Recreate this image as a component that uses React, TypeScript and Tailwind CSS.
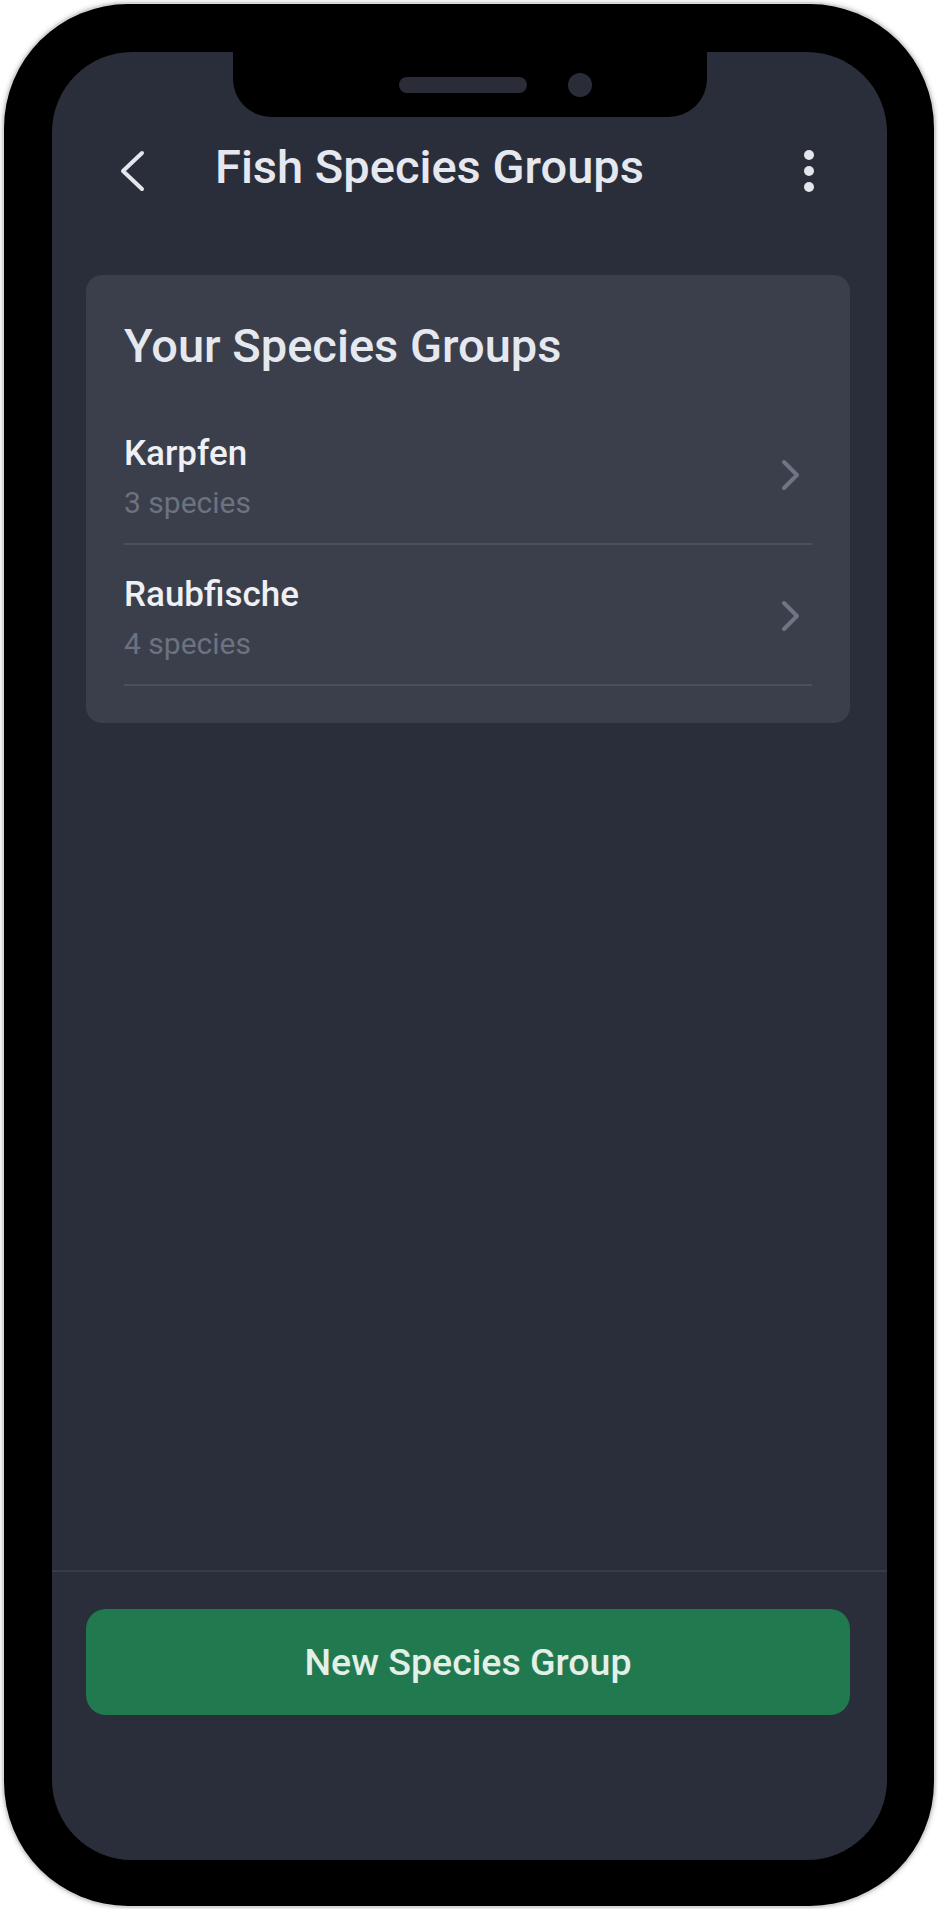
import React from "react";

const font = { fontFamily: "Roboto, 'Noto Sans', Arial, sans-serif" };

function Row({ name, count }: { name: string; count: string }) {
  return (
    <div className="flex items-center border-b-2 border-[#4a505c] pt-[30px] pb-[22px] pr-[10px]">
      <div className="flex flex-col flex-1">
        <div className="text-[35px] leading-[40px] font-medium text-[#eef0f5]">{name}</div>
        <div className="mt-[11px] text-[30px] leading-[36px] text-[#6c7280]">{count}</div>
      </div>
      <svg className="mb-[6px]" width="22" height="34" viewBox="0 0 22 34" fill="none">
        <path d="M4 4 L17 17 L4 30" stroke="#6f7582" strokeWidth="4" strokeLinecap="round" strokeLinejoin="round" />
      </svg>
    </div>
  );
}

export default function App() {
  return (
    <div className="w-[938px] h-[1909px] bg-white p-[4px]" style={font}>
      <div className="w-[930px] h-[1902px] bg-black rounded-[124px] pl-[48px] pr-[47px] pt-[48px] pb-[46px] shadow-[0_0_0_2px_#d6d6d6,0_0_5px_2px_rgba(0,0,0,0.18)]">
        <div className="relative w-[835px] h-[1808px] bg-[#2a2e3a] rounded-[80px] overflow-hidden flex flex-col">
          {/* notch */}
          <div className="absolute left-[181px] top-0 w-[474px] h-[65px] bg-black rounded-b-[38px] flex items-center">
            <div className="ml-[166px] w-[128px] h-[16px] rounded-full bg-[#2a2d38]" />
            <div className="ml-[41px] w-[24px] h-[24px] rounded-full bg-[#2a2d38]" />
          </div>

          {/* header */}
          <div className="mt-[79px] h-[80px] flex items-center shrink-0">
            <svg className="ml-[67px]" width="26" height="42" viewBox="0 0 26 42" fill="none">
              <path d="M23 3 L4 21 L23 39" stroke="#e4e6ee" strokeWidth="4" strokeLinecap="round" strokeLinejoin="round" />
            </svg>
            <div className="ml-[70px] mb-[8px] text-[47px] leading-[56px] font-medium text-[#e6e8f0]">Fish Species Groups</div>
            <div className="ml-auto mr-[73px] flex flex-col gap-[6px]">
              <div className="w-[10px] h-[10px] rounded-full bg-[#e4e6ee]" />
              <div className="w-[10px] h-[10px] rounded-full bg-[#e4e6ee]" />
              <div className="w-[10px] h-[10px] rounded-full bg-[#e4e6ee]" />
            </div>
          </div>

          {/* card */}
          <div className="mt-[64px] ml-[34px] w-[764px] rounded-[16px] bg-[#3a3f4b] pt-[43px] px-[38px] pb-[37px] shrink-0">
            <div className="text-[47px] leading-[56px] font-medium text-[#e6e8f0]">Your Species Groups</div>
            <div className="mt-[30px]">
              <Row name="Karpfen" count="3 species" />
              <Row name="Raubfische" count="4 species" />
            </div>
          </div>

          <div className="flex-1" />

          {/* footer */}
          <div className="border-t-2 border-[#383c48] pt-[37px] pb-[145px] shrink-0">
            <div className="ml-[34px] w-[764px] h-[106px] rounded-[20px] bg-[#217a4f] flex items-center justify-center">
              <span className="text-[37.5px] font-medium text-[#e4efe8]">New Species Group</span>
            </div>
          </div>
        </div>
      </div>
    </div>
  );
}
